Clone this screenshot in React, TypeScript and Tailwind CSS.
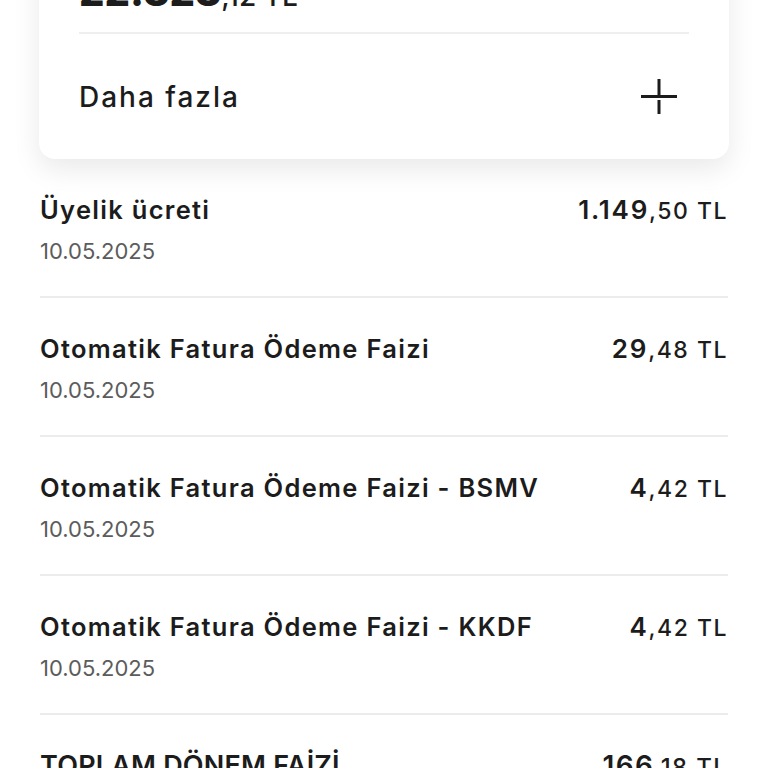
const rows = [
  { title: "Üyelik ücreti", date: "10.05.2025", whole: "1.149", cents: ",50 TL" },
  { title: "Otomatik Fatura Ödeme Faizi", date: "10.05.2025", whole: "29", cents: ",48 TL" },
  { title: "Otomatik Fatura Ödeme Faizi - BSMV", date: "10.05.2025", whole: "4", cents: ",42 TL" },
  { title: "Otomatik Fatura Ödeme Faizi - KKDF", date: "10.05.2025", whole: "4", cents: ",42 TL" },
];

function Amount({ whole, cents }: { whole: string; cents: string }) {
  return (
    <p className="whitespace-nowrap text-[#1c1c1c] leading-none">
      <span className="text-[26px] font-semibold tracking-[1.8px]">{whole}</span>
      <span className="text-[23px] font-medium tracking-[1.5px]">{cents}</span>
    </p>
  );
}

function PlusIcon() {
  return (
    <svg width="38" height="38" viewBox="0 0 38 38" className="text-[#1c1c1c]">
      <path d="M19 1V17.5M19 22V36M1 18.5H37" stroke="currentColor" strokeWidth="3" />
    </svg>
  );
}

export default function App() {
  return (
    <div
      className="h-[768px] w-[768px] overflow-hidden bg-white text-[#1c1c1c]"
      style={{ fontFamily: "Inter, 'Noto Sans', sans-serif" }}
    >
      <div className="mx-[39px] mt-[-56px] rounded-2xl bg-white px-10 pt-6 shadow-[0_10px_28px_rgba(0,0,0,0.09)]">
        <p className="h-12 leading-[48px] whitespace-nowrap">
          <span className="text-[40px] font-extrabold">22.323</span>
          <span className="text-[28px] font-medium">,12 TL</span>
        </p>
        <div className="mt-4 h-[2px] bg-[#efefef]" />
        <div className="flex h-[125px] items-center justify-between">
          <span className="text-[28px] font-medium tracking-[2px]">Daha fazla</span>
          <div className="mr-[11px]">
            <PlusIcon />
          </div>
        </div>
      </div>

      <div className="px-10">
        {rows.map((r) => (
          <div key={r.title} className="border-b-2 border-[#ececec] pt-[35px] pb-[31px]">
            <div className="flex h-8 items-center justify-between">
              <p className="text-[25.5px] leading-8 font-semibold tracking-[1.3px]">{r.title}</p>
              <Amount whole={r.whole} cents={r.cents} />
            </div>
            <p className="mt-[11px] text-[22px] leading-7 text-[#5c5c5c]">{r.date}</p>
          </div>
        ))}
        <div className="mt-[35px] flex h-8 items-center justify-between">
          <p className="text-[27px] leading-8 font-semibold tracking-[0.2px]">TOPLAM DÖNEM FAİZİ</p>
          <p className="whitespace-nowrap leading-none">
            <span className="text-[28px] font-semibold tracking-[1.4px]">166</span>
            <span className="text-[24px] font-medium tracking-[1.3px]">,18 TL</span>
          </p>
        </div>
      </div>
    </div>
  );
}
